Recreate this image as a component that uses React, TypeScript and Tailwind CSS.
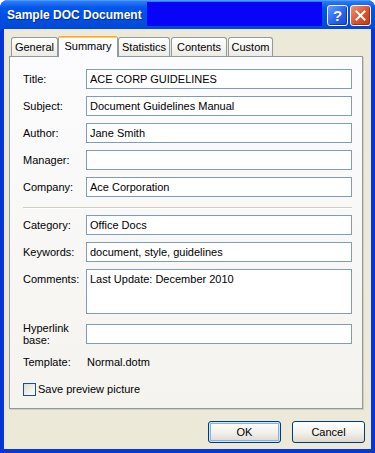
const FONT = "font-['Liberation_Sans',Arial,sans-serif]";

function Field({ label, value = "", tall = false }: { label: string; value?: string; tall?: boolean }) {
  return (
    <div className={`flex ${tall ? "items-start" : "items-center"}`}>
      <div className={`w-[63px] shrink-0 ${tall ? "leading-[20px]" : ""}`}>{label}</div>
      <div
        className={`flex-1 border border-[#7f9db9] bg-white px-[3px] leading-[18px] ${
          tall ? "h-[45px]" : "h-[20px]"
        }`}
      >
        {value}
      </div>
    </div>
  );
}

function Tab({ label, w, ml = "" }: { label: string; w: string; ml?: string }) {
  return (
    <div
      className={`${w} ${ml} h-[19px] flex items-center justify-center rounded-t-[3px] border border-b-0 border-[#919b9c] bg-linear-to-b from-white to-[#ecebe6]`}
    >
      {label}
    </div>
  );
}

export default function App() {
  return (
    <div
      className={`w-[375px] h-[453px] flex flex-col rounded-t-[8px] overflow-hidden bg-[#0636d6] text-[11px] text-black ${FONT}`}
    >
      {/* title bar */}
      <div className="h-[29px] shrink-0 flex items-center pl-[7px] pr-[4px] border-t border-[#4f9bff] bg-linear-to-b from-[#2d7cf8] via-[#0056eb] via-[25%] to-[#0048d8]">
        <span className="text-white font-bold text-[12px] leading-none [text-shadow:1px_1px_0_#0a2a8c]">
          Sample DOC Document
        </span>
        <div className="self-start mt-[1px] ml-[5px] mr-[5px] flex-1 h-[24px] bg-[#0804f6]" />
        <div className="flex gap-[2px]">
          <div className="w-[21px] h-[21px] rounded-[3px] border border-white flex items-center justify-center bg-linear-to-br from-[#6a9cfb] via-[#2e67f0] to-[#1d47d2] shadow-[inset_-1px_-1px_0_#1639b4]">
            <span className="text-white font-bold text-[15px] leading-none">?</span>
          </div>
          <div className="w-[21px] h-[21px] rounded-[3px] border border-white flex items-center justify-center bg-linear-to-br from-[#f0926f] via-[#dd5530] to-[#c13a12] shadow-[inset_-1px_-1px_0_#a8300e]">
            <svg width="11" height="11" viewBox="0 0 11 11">
              <path d="M1.5 1.5 L9.5 9.5 M9.5 1.5 L1.5 9.5" stroke="white" strokeWidth="2" strokeLinecap="square" />
            </svg>
          </div>
        </div>
      </div>

      {/* dialog body */}
      <div className="flex-1 mx-[4px] mb-[4px] bg-[#ece9d8] flex flex-col pl-[5px] pr-[8px] pt-[7px]">
        {/* tabs */}
        <div className="h-[20px] flex items-end pl-[2px] relative z-10">
          <Tab label="General" w="w-[47px]" />
          <div className="w-[60px] h-[21px] -mb-px flex flex-col rounded-t-[3px] border border-b-0 border-[#919b9c] border-t-0 bg-[#fcfcfe] overflow-hidden">
            <div className="h-[3px] bg-linear-to-b from-[#e68b2c] via-[#ffc73c] to-[#ffd869]" />
            <div className="flex-1 flex items-center justify-center pb-[3px]">Summary</div>
          </div>
          <Tab label="Statistics" w="w-[52px]" />
          <Tab label="Contents" w="w-[56px]" ml="ml-[1px]" />
          <Tab label="Custom" w="w-[45px]" ml="ml-[1px]" />
        </div>

        {/* panel */}
        <div className="h-[353px] border border-[#919b9c] bg-linear-to-b from-[#fcfcfe] to-[#f4f3ee] shadow-[1px_1px_0_#d0cec3] pt-[12px] pl-[13px] pr-[10px] flex flex-col">
          <div className="flex flex-col gap-[7px]">
            <Field label="Title:" value="ACE CORP GUIDELINES" />
            <Field label="Subject:" value="Document Guidelines Manual" />
            <Field label="Author:" value="Jane Smith" />
            <Field label="Manager:" />
            <Field label="Company:" value="Ace Corporation" />
          </div>

          <div className="mt-[10px] mb-[6px] h-[2px] border-t border-[#d0d0bf] border-b border-b-white" />

          <div className="flex flex-col gap-[7px]">
            <Field label="Category:" value="Office Docs" />
            <Field label="Keywords:" value="document, style, guidelines" />
            <Field label="Comments:" value="Last Update: December 2010" tall />
          </div>

          <div className="mt-[10px] h-[20px] flex items-center">
            <div className="w-[63px] shrink-0 leading-[12px]">
              Hyperlink
              <br />
              base:
            </div>
            <div className="flex-1 h-[20px] border border-[#7f9db9] bg-white" />
          </div>

          <div className="mt-[8px] h-[20px] flex items-center">
            <div className="w-[64px] shrink-0">Template:</div>
            <div>Normal.dotm</div>
          </div>

          <div className="mt-[9px] flex items-center gap-[2px]">
            <div className="w-[13px] h-[13px] border border-[#1c5180] bg-linear-to-br from-[#dcdcd7] to-white" />
            <span>Save preview picture</span>
          </div>
        </div>

        {/* buttons */}
        <div className="mt-[12px] flex justify-end gap-[11px] -mr-[2px]">
          <div className="w-[73px] h-[22px] rounded-[3px] border border-[#003c74] bg-linear-to-b from-white via-[#f3f2ec] to-[#dcd8cc] shadow-[inset_0_0_0_1px_#cee7ff,inset_0_0_0_2px_#89adf4] flex items-center justify-center">
            OK
          </div>
          <div className="w-[73px] h-[22px] rounded-[3px] border border-[#003c74] bg-linear-to-b from-white via-[#f3f2ec] to-[#dcd8cc] flex items-center justify-center">
            Cancel
          </div>
        </div>
      </div>
    </div>
  );
}
